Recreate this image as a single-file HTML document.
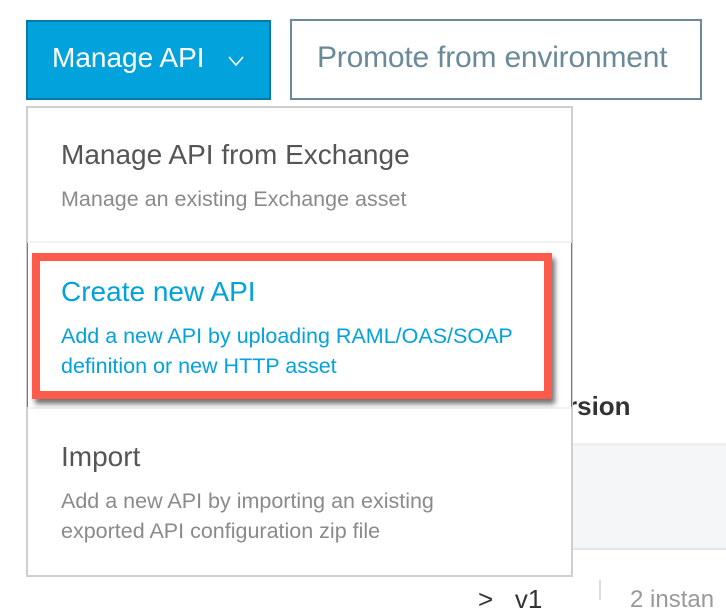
<!DOCTYPE html>
<html><head><style>
body{margin:0;width:726px;height:596px;background:#fff;position:relative;overflow:hidden;font-family:"Liberation Sans",sans-serif}
.a{position:absolute;white-space:nowrap}
</style></head><body>
<div class="a" style="left:26px;top:20px;width:241px;height:76px;background:#02a2dd;border:2px solid #0579a5"></div>
<div class="a" style="left:52px;top:42px;color:#fff;font-size:28px">Manage API</div>
<svg class="a" style="left:228px;top:55px" width="16" height="12"><path d="M1 2 L8 10 L15 2" stroke="#fff" stroke-width="1.6" fill="none"/></svg>
<div class="a" style="left:290px;top:19px;width:408px;height:77px;border:2px solid #6a8a9a"></div>
<div class="a" style="left:317px;top:41px;color:#6a8a99;font-size:30px;letter-spacing:-0.2px">Promote from environment</div>

<div class="a" style="left:567px;top:391px;color:#333;font-size:26px;font-weight:bold">rsion</div>
<div class="a" style="left:573px;top:443px;width:153px;height:102px;background:#f5f6f7;border-top:3px solid #eeeff0;border-bottom:2px solid #e6e7e8"></div>
<div class="a" style="left:478px;top:584px;color:#333;font-size:26px">&gt;&nbsp;&nbsp;&nbsp;v1</div>
<div class="a" style="left:599px;top:580px;width:2px;height:20px;background:#ddd"></div>
<div class="a" style="left:630px;top:586px;color:#999;font-size:24px">2 instan</div>

<div class="a" style="left:26px;top:106px;width:543px;height:467px;border:2px solid #cfcfcf;background:#fff"></div>
<div class="a" style="left:28px;top:241px;width:543px;height:2px;background:#f2f2f2"></div>
<div class="a" style="left:27px;top:243px;width:1px;height:164px;background:#02a2dd"></div>
<div class="a" style="left:571px;top:243px;width:1px;height:164px;background:#02a2dd"></div>
<div class="a" style="left:28px;top:407px;width:543px;height:2px;background:#f2f2f2"></div>

<div class="a" style="left:61px;top:139px;color:#555;font-size:28px">Manage API from Exchange</div>
<div class="a" style="left:61px;top:187px;color:#8a8a8a;font-size:21.5px">Manage an existing Exchange asset</div>

<div class="a" style="left:32px;top:253px;width:504px;height:130px;border:8px solid #fc5a4a;box-shadow:3px 5px 5px rgba(0,0,0,.55)"></div>
<div class="a" style="left:61px;top:276px;color:#02a2dd;font-size:28px">Create new API</div>
<div class="a" style="left:61px;top:321px;color:#02a2dd;font-size:21.5px;line-height:30px">Add a new API by uploading RAML/OAS/SOAP<br>definition or new HTTP asset</div>

<div class="a" style="left:61px;top:441px;color:#555;font-size:28px">Import</div>
<div class="a" style="left:61px;top:486px;color:#8a8a8a;font-size:21.5px;line-height:30px">Add a new API by importing an existing<br>exported API configuration zip file</div>
</body></html>
